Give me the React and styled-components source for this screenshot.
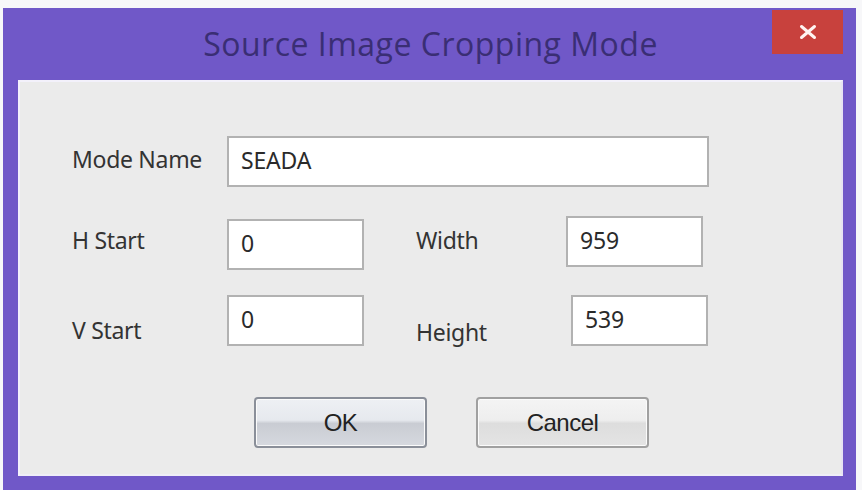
import React from "react";
import styled, { createGlobalStyle } from "styled-components";

const Global = createGlobalStyle`
  html, body { margin: 0; padding: 0; background: #f7f7f9; }
  body { width: 862px; height: 490px; overflow: hidden; font-family: "Noto Sans", "Open Sans", sans-serif; }
`;

const Window = styled.div`
  margin: 8px 0 0 3px;
  width: 853px;
  height: 482px;
  background: #7058c8;
  display: flex;
  flex-direction: column;
  box-sizing: border-box;
  padding: 0 13px 14px 15px;
`;

const TitleBar = styled.div`
  height: 72px;
  position: relative;
  display: flex;
  align-items: center;
  justify-content: center;
`;

const Title = styled.h1`
  margin: 0 0 2px 0;
  font-family: "Open Sans", "Noto Sans", sans-serif;
  font-weight: 400;
  font-size: 32px;
  letter-spacing: 0.5px;
  color: #3a2e74;
`;

const CloseButton = styled.div`
  position: absolute;
  right: 0;
  top: 2px;
  width: 71px;
  height: 44px;
  background: #c8413d;
  display: flex;
  align-items: center;
  justify-content: center;
`;

const Client = styled.div`
  flex: 1;
  background: #ebebeb;
  border: 2px solid #f3f1fb;
  border-right-color: #e6e3f3;
  border-bottom-color: #efeef7;
  box-sizing: border-box;
  display: flex;
  flex-direction: column;
  padding: 54px 0 0 52px;
`;

const Row = styled.div`
  display: flex;
  align-items: flex-start;
  margin-top: ${(p) => p.$gap || 0}px;
  height: 51px;
`;

const Label = styled.div`
  width: ${(p) => p.$w}px;
  flex: none;
  font-size: 23px;
  letter-spacing: -0.3px;
  color: #333333;
  line-height: 51px;
  margin-top: ${(p) => p.$dy || 0}px;
`;

const Field = styled.div`
  width: ${(p) => p.$w}px;
  height: 51px;
  flex: none;
  box-sizing: border-box;
  background: #ffffff;
  border: 2px solid #b2b2b2;
  padding: 0 0 0 12px;
  font-size: 23px;
  letter-spacing: -0.2px;
  color: #2a2a2a;
  line-height: 44px;
  margin-top: ${(p) => p.$dy || 0}px;
`;

const Gap = styled.div`
  width: ${(p) => p.$w}px;
  flex: none;
`;

const Buttons = styled.div`
  display: flex;
  gap: 49px;
  margin: 51px 0 0 182px;
`;

const Button = styled.div`
  width: 173px;
  height: 51px;
  box-sizing: border-box;
  border: 2px solid ${(p) => (p.$default ? "#8a8f99" : "#a0a0a0")};
  border-radius: 4px;
  background: ${(p) =>
    p.$default
      ? "linear-gradient(#eef0f4 0%, #e6e9ee 45%, #c9ccd3 52%, #d6d9df 100%)"
      : "linear-gradient(#f4f4f4 0%, #eeeeee 45%, #dddddd 52%, #e4e4e4 100%)"};
  box-shadow: inset 0 0 0 1px #fbfbfb;
  display: flex;
  align-items: center;
  justify-content: center;
  font-family: "Liberation Sans", Arial, sans-serif;
  font-size: 24px;
  letter-spacing: -0.5px;
  color: #222;
`;

export default function App() {
  return (
    <>
      <Global />
      <Window>
        <TitleBar>
          <Title>Source Image Cropping Mode</Title>
          <CloseButton>
            <svg width="20" height="16" viewBox="0 0 20 16">
              <path d="M3.5 2.5 L16.5 13.5 M16.5 2.5 L3.5 13.5" stroke="#fff4f2" strokeWidth="3" strokeLinecap="round" />
            </svg>
          </CloseButton>
        </TitleBar>
        <Client>
          <Row>
            <Label $w={155} $dy={-2}>Mode Name</Label>
            <Field $w={482}>SEADA</Field>
          </Row>
          <Row $gap={32}>
            <Label $w={155} $dy={-4}>H Start</Label>
            <Field $w={137}>0</Field>
            <Gap $w={52} />
            <Label $w={150} $dy={-4}>Width</Label>
            <Field $w={137} $dy={-3}>959</Field>
          </Row>
          <Row $gap={25}>
            <Label $w={155} $dy={10}>V Start</Label>
            <Field $w={137}>0</Field>
            <Gap $w={52} />
            <Label $w={155} $dy={12}>Height</Label>
            <Field $w={137}>539</Field>
          </Row>
          <Buttons>
            <Button $default>OK</Button>
            <Button>Cancel</Button>
          </Buttons>
        </Client>
      </Window>
    </>
  );
}
